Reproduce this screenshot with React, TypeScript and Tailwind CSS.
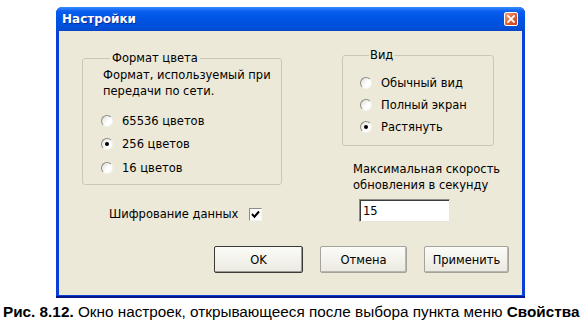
import React from "react";

const F = { fontFamily: '"DejaVu Sans", Tahoma, sans-serif' };

function Radio({ checked }: { checked?: boolean }) {
  return (
    <span className="relative inline-block w-[12px] h-[12px] rounded-full border border-t-[#8d8d86] border-l-[#8d8d86] border-r-[#f4f4f0] border-b-[#f4f4f0] bg-[linear-gradient(135deg,#dcdcd4,#ffffff_55%)] shrink-0">
      {checked && (
        <span className="absolute left-[3px] top-[3px] w-[4px] h-[4px] rounded-full bg-black" />
      )}
    </span>
  );
}

function RadioRow({ label, checked, h }: { label: string; checked?: boolean; h: string }) {
  return (
    <div className={`flex items-center ${h}`}>
      <Radio checked={checked} />
      <span className="ml-[9px]">{label}</span>
    </div>
  );
}

function Btn({ label, w, def }: { label: string; w: string; def?: boolean }) {
  return (
    <div
      className={`${w} h-[27px] flex items-center justify-center rounded-[2px] bg-[linear-gradient(180deg,#fbfbf8,#ebe9e0)] ${
        def
          ? "border border-[#3a3a36] shadow-[inset_-1px_-1px_0_#9a9890]"
          : "border border-[#a5a39a] shadow-[inset_-1px_-1px_0_#b8b6ad]"
      }`}
    >
      {label}
    </div>
  );
}

export default function App() {
  return (
    <div className="w-[586px] h-[324px] bg-white relative overflow-hidden">
      <div className="pt-[7px] pl-[56px]">
        <div className="w-[469px] h-[291px] flex flex-col bg-[#0b3fd6] rounded-t-[6px] border-b-[2px] border-[#001a8c]" style={F}>
          {/* title bar */}
          <div className="h-[24px] flex items-center justify-between pl-[6px] pr-[7px] rounded-t-[6px] bg-[linear-gradient(180deg,#3a8cff_0%,#0a5ef0_18%,#0054e3_50%,#0050da_85%,#0a45c8_100%)]">
            <span className="text-white font-bold text-[12px] [text-shadow:1px_1px_0_#0a2a9a]">Настройки</span>
            <span className="w-[14px] h-[14px] rounded-[2px] border border-white bg-[linear-gradient(135deg,#f0a080,#e05a2a_60%,#c8401a)] flex items-center justify-center">
              <svg width="8" height="8" viewBox="0 0 8 8">
                <path d="M1 1 L7 7 M7 1 L1 7" stroke="white" strokeWidth="1.8" strokeLinecap="square" />
              </svg>
            </span>
          </div>
          {/* client */}
          <div className="flex-1 mx-[3px] mb-[1px] bg-[#ece9d8] text-[11.5px] text-black leading-[16px] flex flex-col whitespace-nowrap">
            <div className="flex pt-[16px]">
              {/* left column */}
              <div className="ml-[23px] w-[200px] flex flex-col">
                <fieldset className="mt-[3px] border border-[#c9c7ba] rounded-[3px] pl-[20px] w-[200px] h-[135px]">
                  <legend className="ml-[7px] px-[2px]">Формат цвета</legend>
                  <div className="mt-[1px]">Формат, используемый при</div>
                  <div>передачи по сети.</div>
                  <div className="mt-[10px] -ml-[2px]">
                    <RadioRow label="65536 цветов" h="h-[23.5px]" />
                    <RadioRow label="256 цветов" checked h="h-[23.5px]" />
                    <RadioRow label="16 цветов" h="h-[23.5px]" />
                  </div>
                </fieldset>
                <div className="flex items-center mt-[21px] ml-[27px] h-[16px]">
                  <span>Шифрование данных</span>
                  <span className="ml-[11px] w-[13px] h-[13px] bg-white border border-t-[#8d8d86] border-l-[#8d8d86] border-r-[#f4f4f0] border-b-[#f4f4f0] flex items-center justify-center">
                    <svg width="9" height="9" viewBox="0 0 9 9">
                      <path d="M1 4 L3.5 6.8 L8 1.5" stroke="black" strokeWidth="2" fill="none" />
                    </svg>
                  </span>
                </div>
              </div>
              {/* right column */}
              <div className="ml-[60px] w-[152px] flex flex-col">
                <fieldset className="border border-[#c9c7ba] rounded-[3px] pl-[17px] w-[152px] h-[99px]">
                  <legend className="ml-[9px] px-[1px]">Вид</legend>
                  <div className="mt-[9px]">
                    <RadioRow label="Обычный вид" h="h-[22px]" />
                    <RadioRow label="Полный экран" h="h-[22px]" />
                    <RadioRow label="Растянуть" checked h="h-[22px]" />
                  </div>
                </fieldset>
                <div className="mt-[15px] ml-[11px]">
                  <div>Максимальная скорость</div>
                  <div>обновления в секунду</div>
                </div>
                <div className="mt-[6px] ml-[17px] w-[91px] h-[23px] bg-white border border-t-[#8d8d86] border-l-[#8d8d86] border-r-[#e8e6da] border-b-[#e8e6da] shadow-[inset_1px_1px_0_#3c3c3a] flex items-center pl-[3px]">
                  15
                </div>
              </div>
            </div>
            <div className="flex mt-auto mb-[22px] ml-[155px] gap-[17px]">
              <Btn label="OK" w="w-[89px]" def />
              <Btn label="Отмена" w="w-[87px]" />
              <Btn label="Применить" w="w-[85px]" />
            </div>
          </div>
        </div>
      </div>
      <div className="mt-[3px] ml-[3px] text-[15.3px] text-black whitespace-nowrap" style={{ fontFamily: '"Liberation Sans", Arial, sans-serif' }}>
        <b>Рис. 8.12.</b> Окно настроек, открывающееся после выбора пункта меню <b>Свойства</b>
      </div>
    </div>
  );
}
